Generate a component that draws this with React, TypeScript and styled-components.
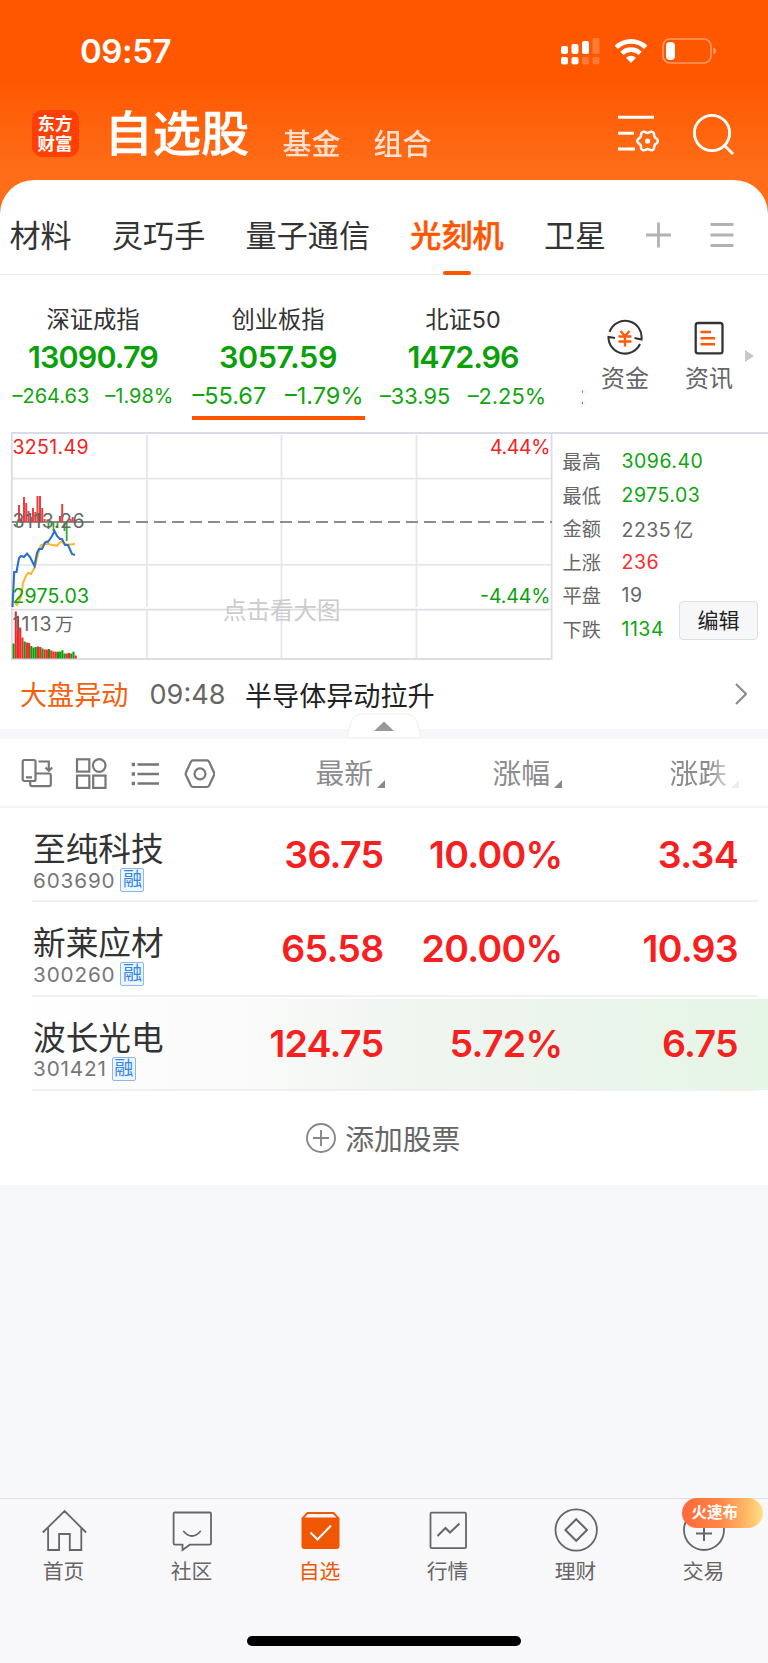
import React from "react";
import styled, { createGlobalStyle } from "styled-components";

const RED = "#f72020";
const GREEN = "#0fa50f";
const ORANGE = "#ff5500";

const Global = createGlobalStyle`
  * { box-sizing: border-box; }
  body {
    margin: 0;
    font-family: Inter, "Noto Sans CJK SC", sans-serif;
    color: #333;
    background: #f7f8fa;
  }
  svg { display: block; flex: none; }
`;

const Page = styled.div`
  width: 768px;
  height: 1663px;
  display: flex;
  flex-direction: column;
  overflow: hidden;
  white-space: nowrap;
  background: #f7f8fa;
`;

const Top = styled.header`
  flex: none;
  height: 218px;
  margin-bottom: -38px;
  background: linear-gradient(#ff5700 0, #ff5700 78px, #ff6d18 170px, #ff6d18);
  color: #fff;
`;

const StatusBar = styled.div`
  height: 90px;
  padding: 12px 51px 0 80px;
  display: flex;
  align-items: center;
`;

const Clock = styled.span`
  flex: 1;
  font-size: 33px;
  font-weight: 600;
  letter-spacing: -0.4px;
`;

const TitleRow = styled.div`
  height: 88px;
  padding-left: 31.5px;
  display: flex;
  align-items: center;
`;

const Logo = styled.div`
  width: 47px;
  height: 47px;
  margin: -1px 26px 0 0;
  border-radius: 10px;
  background: #ff3f05;
  display: grid;
  place-content: center;
  text-align: center;
  font-size: 17.5px;
  font-weight: 700;
  line-height: 20px;
`;

const Title = styled.h1`
  margin: 0 33px 0 0;
  font-size: 48.3px;
  font-weight: 500;
  line-height: 88px;
  -webkit-text-stroke: 0.5px #fff;
`;

const TopLink = styled.span`
  margin: 15px 33px 0 0;
  font-size: 29px;
  font-weight: 500;
  opacity: 0.8;
`;

const Sheet = styled.main`
  flex: none;
  height: 1005px;
  background: #fff;
  border-radius: 34px 34px 0 0;
  overflow: hidden;
`;

const GroupTabs = styled.nav`
  height: 95px;
  padding: 0 38px 0 9.5px;
  display: flex;
  align-items: center;
  border-bottom: 1px solid #e8e9eb;
`;

const GroupTab = styled.span<{ $active?: boolean }>`
  position: relative;
  height: 94px;
  margin-right: 40.3px;
  font-size: 31.1px;
  line-height: 112px;
  color: ${(p) => (p.$active ? ORANGE : "#333")};
  font-weight: ${(p) => (p.$active ? 500 : 400)};
  -webkit-text-stroke: ${(p) => (p.$active ? "0.5px" : "0")} ${ORANGE};
  &::after {
    content: "";
    display: ${(p) => (p.$active ? "block" : "none")};
    position: absolute;
    left: 50%;
    bottom: -1px;
    width: 28px;
    height: 4px;
    margin-left: -14px;
    border-radius: 2px;
    background: ${ORANGE};
  }
`;

const TabTools = styled.div`
  display: flex;
  gap: 39px;
  margin: 16px 0 0 auto;
`;

const IndexStrip = styled.section`
  height: 157px;
  display: flex;
`;

const IndexList = styled.div`
  width: 583px;
  padding: 28px 0 0 0.5px;
  display: flex;
  overflow: hidden;
`;

const IndexCard = styled.div`
  flex: none;
  width: 185px;
  display: flex;
  flex-direction: column;
  align-items: center;
`;

const IndexName = styled.span`
  font-size: 23.3px;
  line-height: 34px;
`;

const IndexValue = styled.span<{ $tracking: number }>`
  font-size: 30.5px;
  font-weight: 600;
  line-height: 40px;
  margin-bottom: 1px;
  letter-spacing: ${(p) => p.$tracking}px;
  color: #0aa00a;
`;

const IndexChange = styled.span<{ $size: number }>`
  display: flex;
  gap: ${(p) => p.$size * 0.8}px;
  font-size: ${(p) => p.$size}px;
  line-height: 36px;
  color: ${GREEN};
`;

const IndexLine = styled.i`
  width: 173px;
  height: 4px;
  margin-top: 2px;
  background: ${ORANGE};
`;

const NextIndex = styled.span`
  padding: 76px 0 0 25px;
  font-size: 21px;
  line-height: 36px;
  color: ${RED};
`;

const Action = styled.div`
  width: 84px;
  padding-top: 44px;
  display: flex;
  flex-direction: column;
  align-items: center;
  gap: 4px;
  font-size: 24px;
  line-height: 36px;
  color: #666;
`;

const MoreArrow = styled.i`
  margin: 75px 0 0 -6px;
  width: 0;
  height: 0;
  border: 6px solid transparent;
  border-left: 9px solid #c8c8cc;
  border-right: 0;
`;

const MarketPanel = styled.section`
  height: 228px;
  display: flex;
`;

const Stats = styled.div`
  flex: 1;
  height: 228px;
  padding: 10.5px 10px 0 8.5px;
  border-top: 2px solid #dcdce6;
  position: relative;
`;

const StatRow = styled.div`
  display: flex;
  height: 33.5px;
  align-items: center;
  font-size: 19.2px;
  color: #666;
`;

const StatLabel = styled.span`
  width: 59px;
`;

const StatValue = styled.span<{ $color: string }>`
  font-size: 19.5px;
  letter-spacing: 0.5px;
  word-spacing: -3.5px;
  color: ${(p) => p.$color};
`;

const EditButton = styled.button`
  position: absolute;
  right: 10px;
  bottom: 20px;
  width: 79px;
  height: 39px;
  padding: 0 0 3px;
  border: 1px solid #dfe0e4;
  border-radius: 4px;
  background: #f6f7f9;
  font: 21px Inter, "Noto Sans CJK SC", sans-serif;
  color: #222;
`;

const News = styled.section`
  height: 69px;
  padding: 0 21px 2px 20px;
  display: flex;
  align-items: center;
  font-size: 27.1px;
`;

const NewsTag = styled.span`
  width: 129.5px;
  color: #f4600c;
`;

const NewsTime = styled.span`
  width: 95.5px;
  padding-top: 1px;
  color: #666;
`;

const NewsTitle = styled.span`
  flex: 1;
  padding-top: 2px;
  color: #222;
`;

const Divider = styled.div`
  height: 10px;
  background: #f5f7fa;
  display: flex;
  justify-content: center;
  align-items: flex-end;
`;

const Columns = styled.div`
  height: 69px;
  display: flex;
  align-items: center;
  border-bottom: 2px solid #f3f3f4;
  color: #8c8c8f;
  font-size: 28.8px;
`;

const ViewTools = styled.div`
  width: 215px;
  padding-left: 20px;
`;

const Column = styled.div<{ $width: number; $faded?: boolean }>`
  width: ${(p) => p.$width}px;
  padding-top: 2px;
  display: flex;
  justify-content: flex-end;
  align-items: flex-end;
  line-height: 38px;
  ${(p) => p.$faded && "mask-image: linear-gradient(90deg, #000 83%, rgba(0,0,0,.15) 97%);"}
`;

const SortMark = styled.i`
  margin: 0 0.5px 5px 3.5px;
  border: 4px solid #88888c;
  border-left-color: transparent;
  border-top-color: transparent;
`;

const StockRow = styled.div<{ $flash?: boolean }>`
  height: 94.3px;
  display: flex;
  background: ${(p) =>
    p.$flash
      ? "linear-gradient(90deg, #fff 0, #fbfbfb 28%, #f0f5f0 55%, #e5f5e6 100%) 0 2px / 100% 91px no-repeat"
      : "none"};
  position: relative;
  &::after {
    content: "";
    position: absolute;
    left: 32px;
    right: 10px;
    bottom: 0;
    height: 2px;
    background: #f0f0f1;
  }
`;

const Stock = styled.div`
  width: 183px;
  padding: 19px 0 0 33px;
`;

const StockName = styled.div`
  font-size: 32.7px;
  line-height: 44px;
`;

const StockCode = styled.div`
  display: flex;
  align-items: center;
  height: 24px;
  margin-top: -3px;
  font-size: 20.7px;
  letter-spacing: 0.85px;
  color: #777;
`;

const MarginBadge = styled.span`
  width: 24px;
  height: 24px;
  margin-left: 5px;
  border: 1.5px solid #8ab8ee;
  border-radius: 2px;
  background: #edf5fe;
  color: #3287e4;
  font-size: 19px;
  line-height: 22px;
  letter-spacing: 0;
  text-align: center;
`;

const Figure = styled.span<{ $width: number; $pull?: number }>`
  width: ${(p) => p.$width}px;
  text-align: right;
  font-size: 37.5px;
  font-weight: 600;
  line-height: 94px;
  letter-spacing: -0.7px;
  color: ${RED};
`;

const AddStock = styled.div`
  height: 94px;
  padding-right: 2px;
  display: flex;
  align-items: center;
  justify-content: center;
  gap: 9.5px;
  font-size: 28.8px;
  color: #666;
`;

const Spacer = styled.div`
  flex: 1;
`;

const BottomBar = styled.nav`
  flex: none;
  height: 165px;
  border-top: 1px solid #dedfe3;
  background: #f8f8fb;
  display: flex;
  flex-wrap: wrap;
  align-content: flex-start;
  justify-content: center;
`;

const BottomItem = styled.div<{ $active?: boolean }>`
  position: relative;
  width: 128px;
  height: 137px;
  padding: 7px 1px 0 0;
  display: flex;
  flex-direction: column;
  align-items: center;
  gap: 3px;
  font-size: 20.8px;
  line-height: 30px;
  color: ${(p) => (p.$active ? "#ef5705" : "#666")};
`;

const Promo = styled.span`
  position: absolute;
  left: 41.5px;
  top: -1px;
  width: 81px;
  height: 30px;
  padding-left: 10px;
  border-radius: 15px;
  background: linear-gradient(90deg, #ff6838, #ff8446 45%, #ffbd69 82%, #ffe08a);
  color: #fff;
  font-size: 15.5px;
  font-weight: 700;
`;

const HomeIndicator = styled.i`
  width: 274px;
  height: 10px;
  border-radius: 5px;
  background: #000;
`;

const Signal = () => (
  <svg width="39" height="28" viewBox="0 0 39 28" fill="#fff">
    <rect x="0" y="9" width="7" height="8" rx="2" />
    <rect x="10.5" y="7" width="7" height="10" rx="2" />
    <rect x="21" y="4" width="7" height="13" rx="2" />
    <rect x="31.5" y="1" width="7" height="16" rx="2" opacity=".22" />
    <rect x="0" y="20" width="7" height="7.5" rx="2" />
    <rect x="10.5" y="20" width="7" height="7.5" rx="2" />
    <rect x="21" y="20" width="7" height="7.5" rx="2" opacity=".22" />
    <rect x="31.5" y="20" width="7" height="7.5" rx="2" opacity=".22" />
  </svg>
);

const WifiMark = styled.svg`
  margin: 0 14px;
`;

const Wifi = () => (
  <WifiMark width="34" height="26" viewBox="0 0 34 26" fill="none" stroke="#fff" strokeWidth="4.6">
    <path d="M2.3 9.3a21.3 21.3 0 0 1 29.4 0" />
    <path d="M7.9 15.3a13 13 0 0 1 18.2 0" />
    <path d="M17 25l-5-5.2a7.4 7.4 0 0 1 10 0z" fill="#fff" stroke="none" />
  </WifiMark>
);

const Battery = () => (
  <svg width="55" height="28" viewBox="0 0 55 28" fill="none">
    <rect x="1" y="2" width="48" height="24" rx="7" stroke="#fff" strokeOpacity=".4" strokeWidth="1.7" />
    <path d="M51.5 10.5q2.5 1.3 2.5 3.5t-2.5 3.5z" fill="#fff" opacity=".45" />
    <rect x="4" y="5" width="9" height="18" rx="4" fill="#fff" />
  </svg>
);

const gearPath = Array.from({ length: 73 }, (_, i) => {
  const a = (i / 72) * Math.PI * 2;
  const r = 9.2 + 1.1 * Math.cos(6 * a);
  return `${i ? "L" : "M"}${(29.6 + r * Math.cos(a)).toFixed(2)} ${(27 + r * Math.sin(a)).toFixed(2)}`;
}).join("");

const FilterMark = styled.svg`
  margin: 0 31px 0 auto;
`;

const FilterIcon = () => (
  <FilterMark width="43" height="40" viewBox="0 0 43 40" fill="none" stroke="#fff" strokeWidth="2.9">
    <path d="M0 3.3h36M0 19.3h16M0 35h17" />
    <path d={gearPath + "z"} strokeWidth="2.5" />
    <circle cx="29.6" cy="27" r="2.6" fill="#fff" stroke="none" />
  </FilterMark>
);

const SearchMark = styled.svg`
  margin-right: 33px;
`;

const SearchIcon = () => (
  <SearchMark width="43" height="44" viewBox="0 0 43 44" fill="none" stroke="#fff" strokeWidth="2.9">
    <circle cx="20" cy="21" r="17.6" />
    <path d="M32.5 33.5l8.5 8.5" />
  </SearchMark>
);

const FundsIcon = () => (
  <svg width="38" height="38" viewBox="0 0 38 38" fill="none" stroke="#333" strokeWidth="2.1">
    <path d="M3.6 12.8A16.5 16.5 0 0 1 35.5 20.5l-7-1.5M34 25A16.5 16.5 0 0 1 2.5 18l6.5 1" />
    <path d="M14.5 12l4.5 5 4.5-5M12.5 17.5h13M12.5 22.5h13M19 17v10.5" stroke="#ff5a0a" strokeWidth="2.4" />
  </svg>
);

const ReportIcon = () => (
  <svg width="38" height="38" viewBox="0 0 38 38" fill="none" stroke="#333" strokeWidth="2.3">
    <rect x="5.7" y="4" width="26.8" height="30.3" rx="2.4" />
    <path d="M10.5 13h10.5M10.5 19.3h14.5M10.5 25.3h14.5" stroke="#ff5a0a" strokeWidth="2.5" />
  </svg>
);

const gains: [number, number][] = [[19, 505], [21.5, 518], [24, 497], [26.2, 503], [28.5, 511], [30.8, 517], [33, 508], [35.3, 512], [37.5, 496], [40, 496], [42.2, 508], [44.5, 519], [60, 516], [62.2, 504], [70.5, 519], [72.7, 517], [75, 520]];
const losses: [number, number][] = [[17, 526], [48.5, 529], [53.5, 531], [57.5, 528], [64.5, 531], [66.7, 541]];
const volumes: [number, string][] = [
  [15, "g"], [47, "r"], [42, "r"], [31, "r"], [21, "r"], [17, "g"], [16, "r"], [15.5, "r"], [12.5, "g"], [11, "g"],
  [11.5, "g"], [12, "r"], [11.5, "r"], [10, "g"], [9, "r"], [9, "r"], [9.5, "g"], [8, "r"], [7, "r"], [6.8, "r"],
  [6.8, "g"], [7, "g"], [8.2, "g"], [5, "g"], [5, "r"], [5.6, "r"], [5, "g"], [6.8, "g"], [3, "r"],
];

const Chart = () => (
  <svg width="554" height="228" viewBox="0 432 554 228" fontSize="19.5" fontFamily='Inter, "Noto Sans CJK SC", sans-serif'>
    <g fill="none" stroke="#e4e7ee" strokeWidth="1.8">
      <path d="M147 435v172M281.5 435v172M416.5 435v172M147 611v48M281.5 611v48M416.5 611v48" />
      <path d="M12 478.7h540M12 564.8h540" />
      <path d="M12 609.6h540" stroke="#dcdee6" />
      <path d="M11 433h543M11.8 433v226h539.8V433" stroke="#dcdce6" />
    </g>
    <path d="M12 522h82" stroke="#8c8c8c" strokeWidth="1.8" />
    <path d="M100 522h452" stroke="#8c8c8c" strokeWidth="2" strokeDasharray="12 6" />
    <text x="223" y="619" fontSize="23.5" fill="#ccc">点击看大图</text>
    <g fill="#ec4040">{gains.map(([x, y]) => <rect key={x} x={x - 1} y={y} width="2" height={522 - y} />)}</g>
    <g fill="#35a835">{losses.map(([x, y]) => <rect key={x} x={x - 0.9} y="522" width="1.8" height={y - 522} />)}</g>
    {volumes.map(([h, c], i) => (
      <rect key={i} x={12.5 + i * 2.22} y={658.5 - h} width="2.1" height={h} fill={c === "g" ? "#0a9d0a" : "#f02828"} />
    ))}
    <path d="M15 603l2 2 4-8 2-14 3-7 2-3 3 1 4-7 3-13 3-9 4-1h4l3 1 5 .6 4-4 5 3h4l5-.6" fill="none" stroke="#ffb52e" strokeWidth="2" />
    <path d="M12.5 607l1.7-35h2.3l2.5-14 2-2 3 1 3-3.5 3 3.5 4.5 9 2.5-13 2-4h3l3-6.5 2-1 1 .5 4-6 2.5-5 2.5 5 3 3h2l3 6h3l4 9 3 1" fill="none" stroke="#2b70c4" strokeWidth="2.1" />
    <text x="12.5" y="453.5" textLength="76" fill={RED}>3251.49</text>
    <text x="12.5" y="528" textLength="72" fill="#666">3113.26</text>
    <text x="12.5" y="602.5" textLength="76.5" fill="#0aa00a">2975.03</text>
    <text x="12.5" y="631" textLength="39" fill="#666">1113</text>
    <text x="55" y="631" fontSize="18.5" fill="#666">万</text>
    <text x="490" y="453.5" textLength="60.5" fill={RED}>4.44%</text>
    <text x="480" y="602.5" textLength="70.5" fill="#0aa00a">-4.44%</text>
  </svg>
);

const indices = [
  { name: "深证成指", value: "13090.79", change: "–264.63", rate: "–1.98%", size: 20, tracking: -0.9 },
  { name: "创业板指", value: "3057.59", change: "–55.67", rate: "–1.79%", size: 23.5, tracking: -0.35, active: true },
  { name: "北证50", value: "1472.96", change: "–33.95", rate: "–2.25%", size: 21.8, tracking: -1 },
];

const stats = [
  ["最高", "3096.40", GREEN],
  ["最低", "2975.03", GREEN],
  ["金额", "2235 亿", "#666"],
  ["上涨", "236", "#fa2c2c"],
  ["平盘", "19", "#666"],
  ["下跌", "1134", GREEN],
];

const stocks = [
  { name: "至纯科技", code: "603690", price: "36.75", rate: "10.00%", diff: "3.34" },
  { name: "新莱应材", code: "300260", price: "65.58", rate: "20.00%", diff: "10.93" },
  { name: "波长光电", code: "301421", price: "124.75", rate: "5.72%", diff: "6.75", flash: true },
];

const BarIcon = ({ children }: { children: React.ReactNode }) => (
  <svg width="48" height="48" viewBox="0 0 48 48" fill="none" stroke="#666" strokeWidth="1.8">{children}</svg>
);

const bottomItems = [
  { label: "首页", icon: <path d="M2.8 26.5L24.6 5l21.500 21.500M8.100 22v22h11V28h10.700v16h11.500V22" /> },
  { label: "社区", icon: <path d="M6.800 6.500h35q1.200 0 1.200 1.200v29.800q0 1.200-1.200 1.200H21.800l-7.300 5.300v-5.300H6.800q-1.200 0-1.200-1.200V7.700q0-1.200 1.200-1.200zM15.300 25q8.500 10 17.500 0" /> },
  {
    label: "自选", active: true,
    icon: (
      <>
        <path d="M5.500 12l5.500-6h27l5.500 6v28q0 3-3 3H8.500q-3 0-3-3z" fill="#ef5705" stroke="none" />
        <path d="M8.500 11.500L12 8h25l3.500 3.500z" fill="#f8f8fb" stroke="none" />
        <path d="M14.500 26.500l7 7 13.500-14" stroke="#fff" strokeWidth="2" />
      </>
    ),
  },
  { label: "行情", icon: <><rect x="6.500" y="6.700" width="35.500" height="35.500" rx="1.200" /><path d="M13.500 30l8-8 4.500 4.500 9.500-9" strokeWidth="2" /></> },
  { label: "理财", icon: <><circle cx="24.200" cy="24" r="20.700" /><path d="M24.200 13.200L35 24 24.200 34.800 13.400 24z" strokeWidth="2" /></> },
  { label: "交易", promo: "火速布", icon: <><circle cx="24" cy="24" r="20" /><path d="M16 27.500h16M24 19v16" strokeWidth="2" /></> },
];

export default function App() {
  return (
    <Page>
      <Global />
      <Top>
        <StatusBar>
          <Clock>09:57</Clock>
          <Signal /><Wifi /><Battery />
        </StatusBar>
        <TitleRow>
          <Logo>东方<br />财富</Logo>
          <Title>自选股</Title>
          <TopLink>基金</TopLink>
          <TopLink>组合</TopLink>
          <FilterIcon /><SearchIcon />
        </TitleRow>
      </Top>
      <Sheet>
        <GroupTabs>
          <GroupTab>材料</GroupTab>
          <GroupTab>灵巧手</GroupTab>
          <GroupTab>量子通信</GroupTab>
          <GroupTab $active>光刻机</GroupTab>
          <GroupTab>卫星</GroupTab>
          <TabTools>
            <svg width="25" height="26" viewBox="0 0 25 26" stroke="#b2b2b2" strokeWidth="2.8"><path d="M0 13h25M12.5 .5v25" /></svg>
            <svg width="24" height="26" viewBox="0 0 24 26" stroke="#b2b2b2" strokeWidth="2.8"><path d="M.5 2.5h23M.5 13h23M.5 23.5h23" /></svg>
          </TabTools>
        </GroupTabs>
        <IndexStrip>
          <IndexList>
            {indices.map((x) => (
              <IndexCard key={x.name}>
                <IndexName>{x.name}</IndexName>
                <IndexValue $tracking={x.tracking}>{x.value}</IndexValue>
                <IndexChange $size={x.size}><span>{x.change}</span><span>{x.rate}</span></IndexChange>
                {x.active && <IndexLine />}
              </IndexCard>
            ))}
            <NextIndex>2</NextIndex>
          </IndexList>
          <Action><FundsIcon />资金</Action>
          <Action><ReportIcon />资讯</Action>
          <MoreArrow />
        </IndexStrip>
        <MarketPanel>
          <Chart />
          <Stats>
            {stats.map(([label, value, color]) => (
              <StatRow key={label}><StatLabel>{label}</StatLabel><StatValue $color={color}>{value}</StatValue></StatRow>
            ))}
            <EditButton>编辑</EditButton>
          </Stats>
        </MarketPanel>
        <News>
          <NewsTag>大盘异动</NewsTag>
          <NewsTime>09:48</NewsTime>
          <NewsTitle>半导体异动拉升</NewsTitle>
          <svg width="12" height="22" viewBox="0 0 12 22" fill="none" stroke="#888" strokeWidth="2"><path d="M1 1l10 10L1 21" /></svg>
        </News>
        <Divider>
          <svg width="76" height="26" viewBox="0 0 76 26">
            <path d="M1 25C5 10 4 1 17 1h42c13 0 12 9 16 24z" fill="#fff" stroke="#eeeff1" strokeWidth="1" />
            <path d="M28 18L38 8.5l10 9.5z" fill="#999" />
          </svg>
        </Divider>
        <Columns>
          <ViewTools>
            <svg width="195" height="34" viewBox="0 0 195 34" fill="none" stroke="#777" strokeWidth="2.2">
              <rect x="2.7" y="4" width="12.8" height="21" rx="1.5" />
              <path d="M6 21.3h6M18.5 5.5h10.3v8.5M25.5 11.5l3.3 3.3 3.3-3.3M15.5 17.5h13.5q1.8 0 1.8 1.8v9q0 1.8-1.8 1.8H12q-1.8 0-1.8-1.8v-3.3" />
              <rect x="57" y="3.3" width="12.3" height="12.3" /><circle cx="79.2" cy="9.5" r="6.3" />
              <rect x="57" y="19.6" width="12.3" height="12.3" /><rect x="73.2" y="19.6" width="12.3" height="12.3" />
              <path d="M117.5 8.5H139M117.5 18H139M117.5 27.5H139" strokeWidth="2.7" />
              <path d="M111.7 8.5h3.3M111.7 18h3.3M111.7 27.5h3.3" strokeWidth="3.3" />
              <path d="M173 4.3h14q1.3 0 2 1.2l5 11q.6 1.4 0 2.8l-5 10.5q-.7 1.2-2 1.2h-14q-1.3 0-2-1.2l-5-10.5q-.6-1.4 0-2.8l5-11q.7-1.2 2-1.2z" />
              <circle cx="180" cy="17.8" r="5.5" />
            </svg>
          </ViewTools>
          <Column $width={170}>最新<SortMark /></Column>
          <Column $width={177}>涨幅<SortMark /></Column>
          <Column $width={177} $faded>涨跌<SortMark /></Column>
        </Columns>
        {stocks.map((s) => (
          <StockRow key={s.code} $flash={s.flash}>
            <Stock>
              <StockName>{s.name}</StockName>
              <StockCode>{s.code}<MarginBadge>融</MarginBadge></StockCode>
            </Stock>
            <Figure $width={200.5}>{s.price}</Figure>
            <Figure $width={179}>{s.rate}</Figure>
            <Figure $width={175.5}>{s.diff}</Figure>
          </StockRow>
        ))}
        <AddStock>
          <svg width="30" height="30" viewBox="0 0 30 30" fill="none" stroke="#888" strokeWidth="1.9">
            <circle cx="15" cy="15" r="14" /><path d="M7 15h16M15 7v16" />
          </svg>
          添加股票
        </AddStock>
      </Sheet>
      <Spacer />
      <BottomBar>
        {bottomItems.map((b) => (
          <BottomItem key={b.label} $active={b.active}>
            <BarIcon>{b.icon}</BarIcon>
            {b.label}
            {b.promo && <Promo>{b.promo}</Promo>}
          </BottomItem>
        ))}
        <HomeIndicator />
      </BottomBar>
    </Page>
  );
}
